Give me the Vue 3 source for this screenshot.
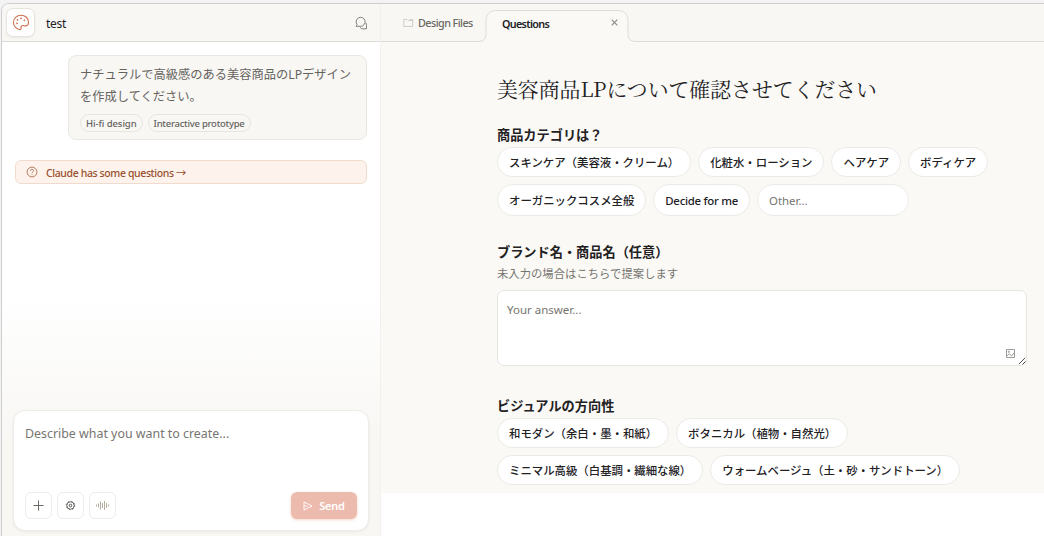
<template>
  <div class="app">
    <aside class="chat">
      <header class="chat-header">
        <button class="logo" aria-label="Home">
          <svg width="18" height="18" viewBox="0 0 18 18" fill="none" stroke="#d0704f" stroke-width="1.1">
            <path d="M9 1.300C4.800 1.300 1.400 4.300 1.400 8.300c0 3.700 3 6.700 6.400 7.400.9.1 1.200-.4 1.200-1.100v-1c0-1.400.9-2.200 2.100-2.100 1.200.2 1.700.5 2.700.4 1.700-.2 2.700-1.700 2.700-3.900C16.500 4.200 13.200 1.300 9 1.300z" />
            <g fill="#d0704f" stroke="none">
              <circle cx="5" cy="9.300" r="0.9" />
              <circle cx="5.500" cy="5.800" r="0.9" />
              <circle cx="9" cy="4.300" r="0.9" />
              <circle cx="12.400" cy="6.300" r="0.9" />
            </g>
          </svg>
        </button>
        <span class="project-name">test</span>
        <svg class="chat-icon" width="13" height="14" viewBox="0 0 13 14" fill="none" stroke="#77756f" stroke-width="0.9">
          <path d="M1 10.300l1.200-1.600A4.500 4.500 0 1 1 5.600 10.300H1z" />
          <path d="M10.800 6.800c.6.800.9 1.700.7 2.700v3.300H8a3.500 3.500 0 0 1-3-1.500" />
        </svg>
      </header>

      <div class="messages">
        <div class="bubble">
          <p>ナチュラルで高級感のある美容商品のLPデザイン<br />を作成してください。</p>
          <div class="tags">
            <span class="tag">Hi-fi design</span>
            <span class="tag">Interactive prototype</span>
          </div>
        </div>
        <button class="notice">
          <svg width="12" height="12" viewBox="0 0 12 12" fill="none" stroke="#a9603f" stroke-width="0.8">
            <circle cx="6" cy="6" r="4.900" />
            <path d="M4.500 4.800a1.500 1.400 0 1 1 2.200 1.200c-.5.3-.7.5-.7 1.100M6 8.100v.9" />
          </svg>
          <span>Claude has some questions →</span>
        </button>
      </div>

      <div class="composer">
        <textarea v-model="prompt" class="prompt" placeholder="Describe what you want to create..."></textarea>
        <div class="toolbar">
          <button class="tool" aria-label="Add">
            <svg width="11" height="11" viewBox="0 0 11 11" stroke="#6b6964" stroke-width="1"><path d="M5.500 .5v10M.5 5.500h10" /></svg>
          </button>
          <button class="tool" aria-label="Settings">
            <svg width="11" height="11" viewBox="0 0 11 11" fill="none" stroke="#45433f">
              <circle cx="5.500" cy="5.500" r="3.700" stroke-width="0.8" />
              <circle cx="5.500" cy="5.500" r="4.200" stroke-width="0.7" stroke-dasharray="1.600 1.700" />
              <circle cx="5.500" cy="5.500" r="1.300" stroke-width="0.9" />
            </svg>
          </button>
          <button class="tool" aria-label="Voice">
            <svg width="13" height="11" viewBox="0 0 13 11" stroke="#b3ad9f" stroke-width="1">
              <path d="M.5 4.500v2M2.500 3.500v4M4.500 1.500v8M6.500 3v5M8.500 1v9M10.500 3v5M12.500 4.500v2" />
            </svg>
          </button>
          <button class="send">
            <svg width="10" height="10" viewBox="0 0 10 10" fill="none" stroke="#fff" stroke-width="0.9">
              <path d="M1 1l8 4-8 4V1zM1 5h3.500" />
            </svg>
            Send
          </button>
        </div>
      </div>
    </aside>

    <main class="main">
      <nav class="tabs">
        <div class="tab files">
          <svg width="11" height="10" viewBox="0 0 11 10" fill="none" stroke="#c6c3bc" stroke-width="0.8">
            <path d="M.8 1.500h3.400l1 1h4.500v6H.8zM6.500 1.500h3.200v1" />
          </svg>
          <span>Design Files</span>
        </div>
        <div class="tab active">
          <svg class="tab-shape" width="160" height="33" viewBox="0 0 160 33">
            <path d="M0 31.500c6 0 8-3 8-8V11C8 4 12 .5 19 .5h120c7 0 11 3.500 11 10.500v12.500c0 5 2 8 8 8h2V33H0z" fill="#faf9f5" />
            <path d="M0 31.500c6 0 8-3 8-8V11C8 4 12 .5 19 .5h120c7 0 11 3.500 11 10.500v12.500c0 5 2 8 8 8h2" fill="none" stroke="#dddcd7" />
          </svg>
          <span class="tab-title">Questions</span>
          <svg class="close" width="7" height="7" viewBox="0 0 7 7" stroke="#8b8983" stroke-width="1.1"><path d="M.7.7l5.600 5.600M6.300.7L.7 6.300" /></svg>
        </div>
      </nav>

      <div class="page">
        <h1>美容商品LPについて確認させてください</h1>

        <section class="question">
          <h2>商品カテゴリは？</h2>
          <div class="options">
            <button v-for="item in categories" :key="item" class="pill">{{ item }}</button>
          </div>
          <div class="options tall">
            <button class="pill">オーガニックコスメ全般</button>
            <button class="pill latin">Decide for me</button>
            <input v-model="other" class="pill other" placeholder="Other..." />
          </div>
        </section>

        <section class="question brand">
          <h2>ブランド名・商品名（任意）</h2>
          <p class="hint">未入力の場合はこちらで提案します</p>
          <div class="answer">
            <textarea v-model="brand" placeholder="Your answer..."></textarea>
            <svg class="picture" width="9" height="9" viewBox="0 0 9 9" fill="none" stroke="#85837e" stroke-width="0.8">
              <path d="M.5.5h8v8h-8zM.8 7l2.400-2.200L5.500 7l2.800-3.400" />
              <circle cx="2.800" cy="2.800" r="0.6" />
            </svg>
            <svg class="grip" width="8" height="8" viewBox="0 0 8 8" stroke="#4f4e4b" stroke-width="1"><path d="M.8 7.200l6.400-6.400M4.500 7.500l3-3" /></svg>
          </div>
        </section>

        <section class="question">
          <h2>ビジュアルの方向性</h2>
          <div v-for="(row, i) in directions" :key="i" class="options">
            <button v-for="item in row" :key="item" class="pill">{{ item }}</button>
          </div>
        </section>
      </div>
    </main>
  </div>
</template>

<script setup>
import { ref } from 'vue'

const prompt = ref('')
const other = ref('')
const brand = ref('')

const categories = ['スキンケア（美容液・クリーム）', '化粧水・ローション', 'ヘアケア', 'ボディケア']

const directions = [
  ['和モダン（余白・墨・和紙）', 'ボタニカル（植物・自然光）'],
  ['ミニマル高級（白基調・繊細な線）', 'ウォームベージュ（土・砂・サンドトーン）'],
]
</script>

<style>
body {
  background: #f4f3f4;
  overflow: hidden;
}
</style>

<style scoped>
* {
  box-sizing: border-box;
}

.app {
  display: flex;
  height: 533px;
  margin: 3px 0 0 1px;
  border-top: 1px solid #d0cfd0;
  border-left: 1px solid #cfcecf;
  border-top-left-radius: 8px;
  background: #fff;
  overflow: hidden;
  font-family: "Noto Sans", "Noto Sans CJK JP", sans-serif;
  color: #22211f;
}

button,
input,
textarea {
  font-family: inherit;
  color: inherit;
  margin: 0;
}

svg {
  flex-shrink: 0;
  display: block;
}

.chat {
  width: 379px;
  flex-shrink: 0;
  display: flex;
  flex-direction: column;
  border-right: 1px solid #f3f1ed;
  background: linear-gradient(#fff 54%, #f8f7f4 82%);
}

.chat-header {
  height: 38px;
  flex-shrink: 0;
  display: flex;
  align-items: center;
  padding: 0 12px 0 4px;
  background: #f8f7f4;
  border-bottom: 1px solid #dddcd8;
}

.logo {
  width: 29px;
  height: 29px;
  display: flex;
  align-items: center;
  justify-content: center;
  padding: 0;
  border: 1px solid #e6e4df;
  border-radius: 7px;
  background: #fff;
  box-shadow: 0 1px 2px rgba(0, 0, 0, 0.06);
}

.project-name {
  margin-left: 11px;
  padding-top: 2px;
  font-size: 12px;
  letter-spacing: -0.3px;
}

.chat-icon {
  margin-left: auto;
}

.messages {
  flex: 1;
  display: flex;
  flex-direction: column;
  padding: 13px 13px 0;
}

.bubble {
  width: 299px;
  height: 85px;
  align-self: flex-end;
  padding: 8px 11px;
  border: 1px solid #e9e7e2;
  border-radius: 8px;
  background: #f8f7f4;
}

.bubble p {
  margin: 0;
  font-size: 12.250px;
  line-height: 22px;
  color: #65635e;
  white-space: nowrap;
}

.tags {
  display: flex;
  gap: 5px;
  margin-top: 6px;
}

.tag {
  height: 18px;
  padding: 0 5px;
  border: 1px solid #e7e5df;
  border-radius: 9px;
  font-size: 9.500px;
  font-weight: 500;
  line-height: 17px;
  letter-spacing: -0.08px;
  color: #65635e;
  white-space: nowrap;
}

.tag:last-child {
  letter-spacing: -0.26px;
}

.notice {
  height: 24px;
  display: flex;
  align-items: center;
  gap: 8px;
  margin-top: 20px;
  padding: 0 10px;
  border: 1px solid #f0dccf;
  border-radius: 6px;
  background: #fdf3ec;
  color: #99502f;
  font-size: 10.500px;
  font-weight: 500;
  letter-spacing: -0.38px;
}

.notice span {
  padding-top: 1px;
}

.composer {
  height: 121px;
  display: flex;
  flex-direction: column;
  justify-content: space-between;
  margin: 0 11px 5px;
  padding: 11px;
  border: 1px solid #eeece8;
  border-radius: 12px;
  background: #fff;
  box-shadow: 0 1px 3px rgba(0, 0, 0, 0.06);
}

.prompt {
  height: 40px;
  padding: 1px 0 0;
  border: 0;
  outline: 0;
  resize: none;
  background: none;
  font-size: 12.400px;
  line-height: 22px;
}

::placeholder {
  color: #777570;
  opacity: 1;
}

.toolbar {
  display: flex;
  gap: 5px;
}

.tool {
  width: 27px;
  height: 27px;
  display: flex;
  align-items: center;
  justify-content: center;
  padding: 0;
  border: 1px solid #eeece8;
  border-radius: 6px;
  background: #fff;
}

.send {
  width: 66px;
  height: 27px;
  display: flex;
  align-items: center;
  justify-content: center;
  gap: 6px;
  margin-left: auto;
  padding: 0;
  border: 0;
  border-radius: 6px;
  background: #ecbbad;
  color: #fff;
  font-size: 11px;
  font-weight: 600;
  letter-spacing: -0.2px;
  box-shadow: 0 1px 3px rgba(217, 119, 87, 0.3);
}

.main {
  flex: 1;
  min-width: 0;
}

.tabs {
  height: 38px;
  display: flex;
  padding-left: 22px;
  background: #f8f7f4;
  border-bottom: 1px solid #dddcd7;
}

.tab {
  display: flex;
  align-items: center;
  font-size: 10.800px;
  font-weight: 500;
}

.files {
  gap: 4px;
  width: 75px;
  color: #6a6863;
  letter-spacing: -0.56px;
  white-space: nowrap;
}

.active {
  position: relative;
  width: 160px;
  height: 38px;
  padding: 0 20px 0 24px;
  justify-content: space-between;
  color: #22211f;
  font-weight: 600;
  letter-spacing: -0.7px;
}

.tab-shape {
  position: absolute;
  left: 0;
  top: 6px;
}

.tab-title,
.close {
  position: relative;
}

.close {
  margin-bottom: 2px;
}

.page {
  height: 451px;
  padding: 30px 17px 0 116px;
  background: #faf9f5;
}

h1 {
  margin: 0 0 21px;
  font-family: "Noto Serif CJK JP", "Noto Serif JP", "Noto Sans CJK JP", serif;
  font-size: 20.850px;
  font-weight: 400;
  line-height: 32px;
  white-space: nowrap;
}

.question {
  margin-bottom: 26px;
}

.brand {
  margin-bottom: 30px;
}

h2 {
  margin: 0 0 2px;
  font-size: 13.200px;
  font-weight: 700;
  line-height: 20px;
}

.options {
  display: flex;
  gap: 7px;
  margin-bottom: 7px;
}

.options:last-child {
  margin-bottom: 0;
}

.pill {
  height: 30px;
  padding: 0 11px;
  border: 1px solid #eceae6;
  border-radius: 16px;
  background: #fff;
  font-size: 11.400px;
  font-weight: 500;
  white-space: nowrap;
}

.latin {
  letter-spacing: -0.27px;
}

.tall .pill {
  height: 32px;
}

.other {
  width: 152px;
  outline: 0;
  font-weight: 400;
}

.hint {
  margin: 0 0 6px;
  font-size: 11.350px;
  line-height: 20px;
  color: #777570;
}

.answer {
  position: relative;
  height: 76px;
}

.answer textarea {
  display: block;
  width: 100%;
  height: 100%;
  padding: 9px;
  border: 1px solid #e7e5e0;
  border-radius: 7px;
  outline: 0;
  resize: none;
  background: #fff;
  font-size: 11.500px;
  line-height: 20px;
}

.picture {
  position: absolute;
  right: 12px;
  bottom: 8px;
}

.grip {
  position: absolute;
  right: 1px;
  bottom: 1px;
}
</style>
